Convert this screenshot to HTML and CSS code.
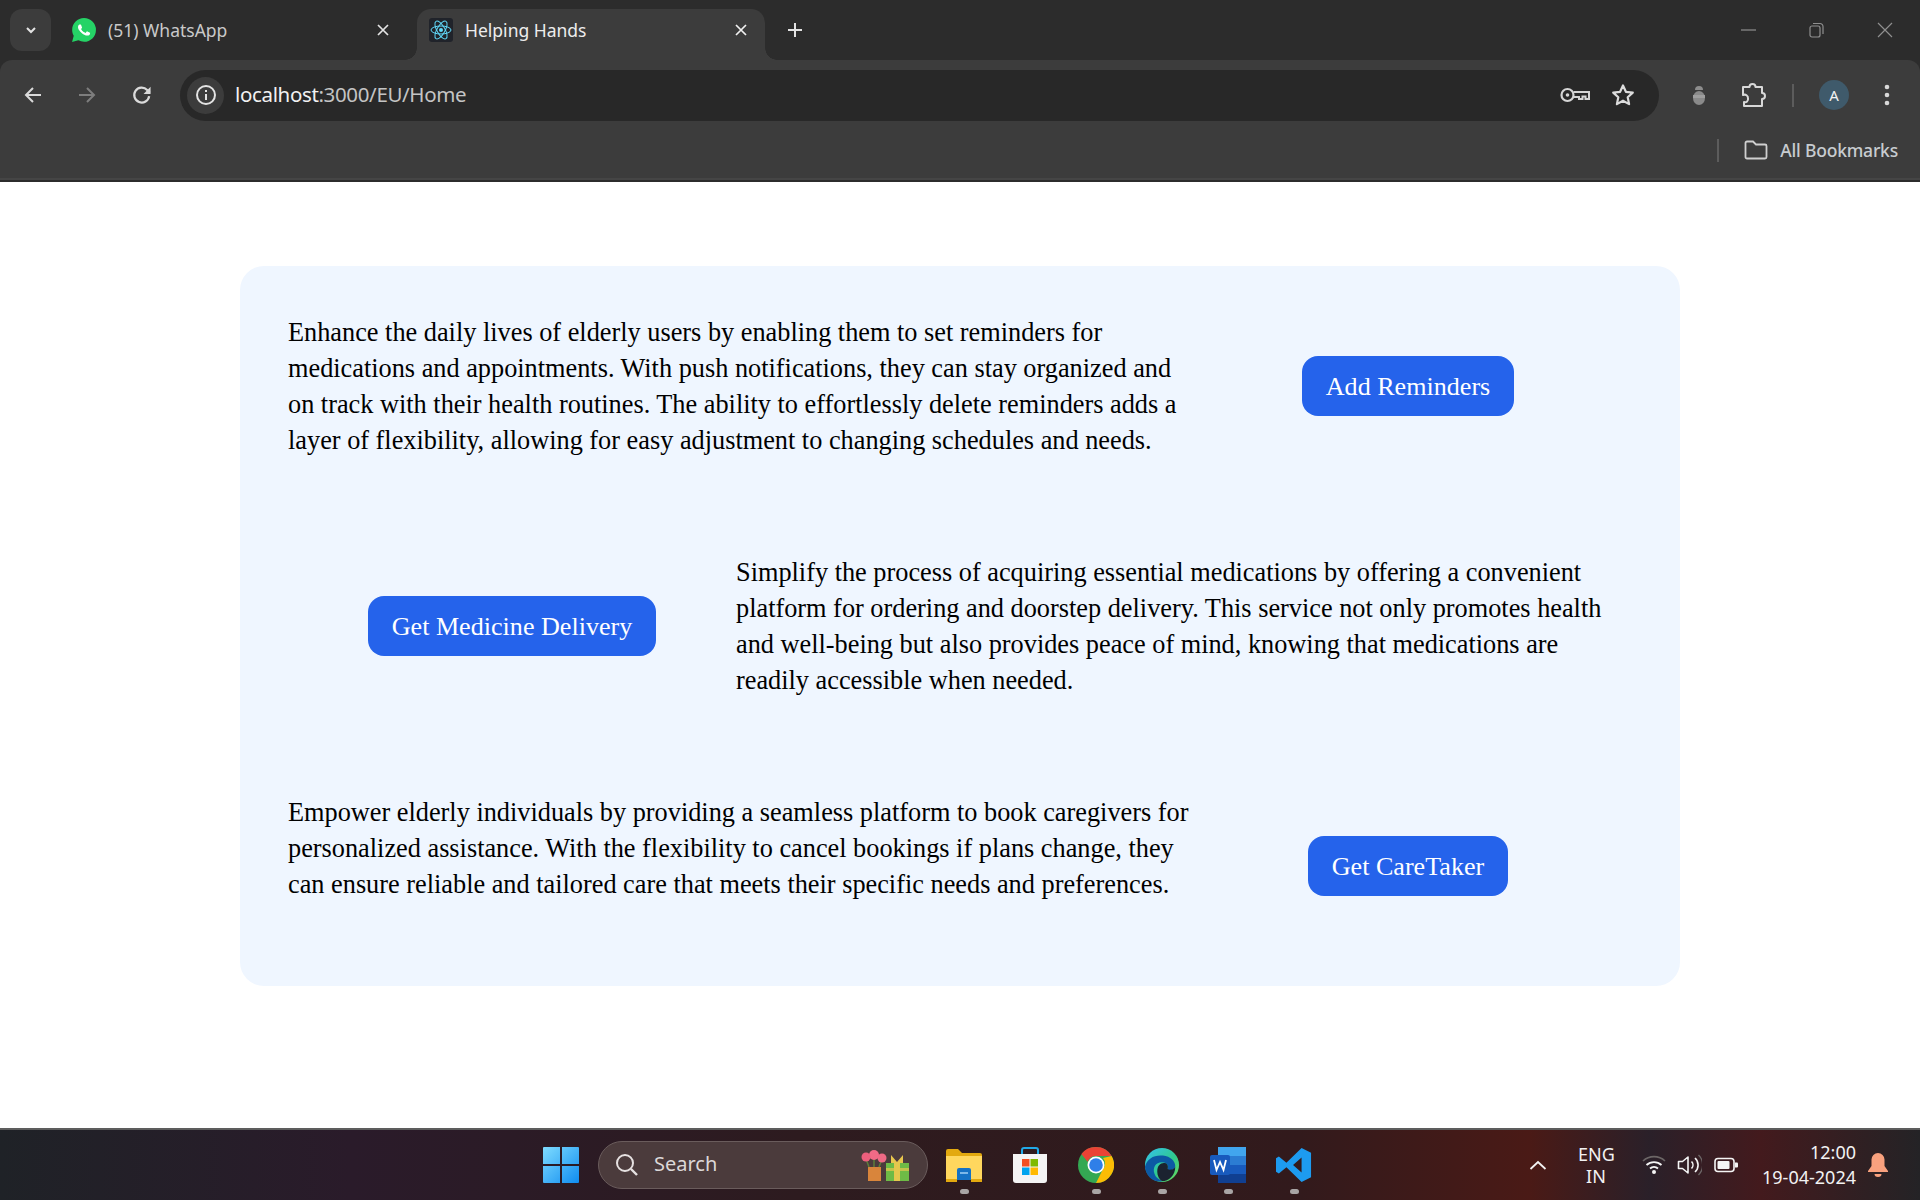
FILE: index.html
```html
<!DOCTYPE html>
<html lang="en">
<head>
    <meta charset="UTF-8">
    <meta name="viewport" content="width=device-width, initial-scale=1.0">
    <title>Helping Hands</title>
    <link rel="stylesheet" href="styles.css">
</head>
<body>
    <div class="chrome">
        <div class="tabstrip">
            <button class="tab-search"><svg width="14" height="14" viewBox="0 0 14 14"><path d="M3 5l4 4 4-4" fill="none" stroke="#e3e3e3" stroke-width="2"/></svg></button>
            <div class="tab">
                <svg class="favicon" viewBox="0 0 24 24"><path fill="#25d366" d="M20.464 3.488A11.815 11.815 0 0012.05 0C5.495 0 .16 5.335.157 11.892c0 2.096.547 4.142 1.588 5.945L.057 24l6.305-1.654a11.882 11.882 0 005.683 1.448h.005c6.554 0 11.89-5.335 11.893-11.893a11.821 11.821 0 00-3.48-8.413z"/><path fill="#fff" d="M17.472 14.382c-.297-.149-1.758-.867-2.03-.967-.273-.099-.471-.148-.67.15-.197.297-.767.966-.94 1.164-.173.199-.347.223-.644.075-.297-.15-1.255-.463-2.39-1.475-.883-.788-1.48-1.761-1.653-2.059-.173-.297-.018-.458.13-.606.134-.133.298-.347.446-.52.149-.174.198-.298.298-.497.099-.198.05-.371-.025-.52-.075-.149-.669-1.612-.916-2.207-.242-.579-.487-.5-.669-.51-.173-.008-.371-.01-.57-.01-.198 0-.52.074-.792.372-.272.297-1.04 1.016-1.04 2.479 0 1.462 1.065 2.875 1.213 3.074.149.198 2.096 3.2 5.077 4.487.709.306 1.262.489 1.694.625.712.227 1.36.195 1.871.118.571-.085 1.758-.719 2.006-1.413.248-.694.248-1.289.173-1.413-.074-.124-.272-.198-.57-.347"/></svg>
                <span class="tab-title">(51) WhatsApp</span>
                <svg class="tab-close" viewBox="0 0 14 14"><path d="M2 2l10 10M12 2L2 12" stroke="#e3e3e3" stroke-width="1.7"/></svg>
            </div>
            <div class="tab active">
                <svg class="favicon react" viewBox="0 0 24 24"><rect width="24" height="24" rx="3" fill="#20232a"/><g fill="none" stroke="#61dafb" stroke-width="1"><ellipse cx="12" cy="12" rx="10" ry="4"/><ellipse cx="12" cy="12" rx="10" ry="4" transform="rotate(60 12 12)"/><ellipse cx="12" cy="12" rx="10" ry="4" transform="rotate(120 12 12)"/></g><circle cx="12" cy="12" r="2" fill="#61dafb"/></svg>
                <span class="tab-title">Helping Hands</span>
                <svg class="tab-close" viewBox="0 0 14 14"><path d="M2 2l10 10M12 2L2 12" stroke="#f0f0f0" stroke-width="1.7"/></svg>
            </div>
            <svg class="new-tab" viewBox="0 0 16 16"><path d="M8 1v14M1 8h14" stroke="#e3e3e3" stroke-width="2"/></svg>
            <div class="window-btns">
                <svg width="16" height="16" viewBox="0 0 16 16"><path d="M0 8h15" stroke="#8f8f8f" stroke-width="1.2"/></svg>
                <svg width="16" height="16" viewBox="0 0 16 16"><rect x="1" y="4" width="10" height="11" rx="2" fill="none" stroke="#8f8f8f" stroke-width="1.2"/><path d="M4 1.5h7a3 3 0 013 3V12" fill="none" stroke="#8f8f8f" stroke-width="1.2"/></svg>
                <svg width="16" height="16" viewBox="0 0 16 16"><path d="M1 1l14 14M15 1L1 15" stroke="#8f8f8f" stroke-width="1.2"/></svg>
            </div>
        </div>
        <div class="toolbar">
            <svg class="nav-icon" viewBox="0 0 20 20"><path d="M18 10H3M10 3l-7 7 7 7" fill="none" stroke="#dadada" stroke-width="2"/></svg>
            <svg class="nav-icon" viewBox="0 0 20 20"><path d="M2 10h15M10 3l7 7-7 7" fill="none" stroke="#7d7d7d" stroke-width="2"/></svg>
            <svg class="nav-icon" viewBox="0 0 20 20"><path d="M16.5 11a6.8 6.8 0 11-1.8-5.6L17 8" fill="none" stroke="#dadada" stroke-width="2"/><path d="M17.8 2.5V9h-6.4z" fill="#dadada"/></svg>
            <div class="omnibox">
                <span class="site-info"><svg width="22" height="22" viewBox="0 0 22 22"><circle cx="11" cy="11" r="9" fill="none" stroke="#e3e3e3" stroke-width="2"/><path d="M11 10v6M11 6v2" stroke="#e3e3e3" stroke-width="2"/></svg></span>
                <span class="url">localhost<span class="url-dim">:3000/EU/Home</span></span>
                <svg class="omni-key" width="30" height="16" viewBox="0 0 30 16"><circle cx="7.500" cy="8" r="6" fill="none" stroke="#d5d5d5" stroke-width="2.200"/><circle cx="7.500" cy="8" r="1.800" fill="#d5d5d5"/><path d="M13.500 5h15.500v7h-3.500v-2.500h-3V12h-3.500V10h-5.500" fill="none" stroke="#d5d5d5" stroke-width="2"/></svg>
                <svg class="omni-star" width="24" height="24" viewBox="0 0 24 24"><path d="M12 2.500l2.900 6.300 6.900.8-5.100 4.700 1.400 6.800-6.100-3.400-6.100 3.400 1.400-6.800-5.100-4.700 6.900-.8z" fill="none" stroke="#dcdcdc" stroke-width="2.200" stroke-linejoin="round"/></svg>
            </div>
            <svg class="ext-bug" width="18" height="20" viewBox="0 0 18 20"><path d="M5 5a4 4 0 018 0z" fill="#8d8d8d"/><ellipse cx="9" cy="13" rx="6" ry="7" fill="#8a8a8a"/><path d="M3 10h12v3H3z" fill="#9e9e9e"/></svg>
            <svg class="ext-puzzle" width="26" height="26" viewBox="0 0 26 26"><path d="M2 5h6.500a3 3 0 016 0H21v6a2.800 2.800 0 010 6v7H3v-4a3 3 0 004-3.500A3.500 3.500 0 002 13z" fill="none" stroke="#d8d8d8" stroke-width="2" stroke-linejoin="round"/></svg>
            <span class="tool-sep"></span>
            <span class="avatar">A</span>
            <svg class="kebab" width="6" height="22" viewBox="0 0 6 22"><circle cx="3" cy="3" r="2.300" fill="#d8d8d8"/><circle cx="3" cy="11" r="2.300" fill="#d8d8d8"/><circle cx="3" cy="19" r="2.300" fill="#d8d8d8"/></svg>
        </div>
        <div class="bookmarks">
            <span class="bm-sep"></span>
            <svg width="24" height="20" viewBox="0 0 24 20"><path d="M1.500 3a1.500 1.500 0 011.500-1.500h6l3 3h9A1.500 1.500 0 0122.500 6v11a1.500 1.500 0 01-1.500 1.500H3A1.500 1.500 0 011.500 17z" fill="none" stroke="#cfcfcf" stroke-width="1.800"/></svg>
            <span class="bm-label">All Bookmarks</span>
        </div>
    </div>

    <main class="page">
        <section class="card">
            <div class="feature">
                <p>Enhance the daily lives of elderly users by enabling them to set reminders for<br>medications and appointments. With push notifications, they can stay organized and<br>on track with their health routines. The ability to effortlessly delete reminders adds a<br>layer of flexibility, allowing for easy adjustment to changing schedules and needs.</p>
                <div class="action"><a class="btn">Add Reminders</a></div>
            </div>
            <div class="feature flip">
                <div class="action"><a class="btn">Get Medicine Delivery</a></div>
                <p>Simplify the process of acquiring essential medications by offering a convenient<br>platform for ordering and doorstep delivery. This service not only promotes health<br>and well-being but also provides peace of mind, knowing that medications are<br>readily accessible when needed.</p>
            </div>
            <div class="feature">
                <p>Empower elderly individuals by providing a seamless platform to book caregivers for<br>personalized assistance. With the flexibility to cancel bookings if plans change, they<br>can ensure reliable and tailored care that meets their specific needs and preferences.</p>
                <div class="action"><a class="btn">Get CareTaker</a></div>
            </div>
        </section>
    </main>

    <footer class="taskbar">
        <div class="task-apps">
            <svg class="start" width="36" height="36" viewBox="0 0 36 36"><defs><linearGradient id="win" x1="0" y1="0" x2="1" y2="1"><stop offset="0" stop-color="#7fdcff"/><stop offset="1" stop-color="#0f8cf0"/></linearGradient></defs><path fill="url(#win)" d="M0 1a1 1 0 011-1h16v17H0zM19 0h16a1 1 0 011 1v16H19zM0 19h17v17H1a1 1 0 01-1-1zM19 19h17v16a1 1 0 01-1 1H19z"/></svg>
            <div class="search">
                <svg width="24" height="24" viewBox="0 0 24 24"><circle cx="10" cy="10" r="8" fill="none" stroke="#e6e1e1" stroke-width="2"/><path d="M16 16l6 6" stroke="#e6e1e1" stroke-width="2.400"/></svg>
                <span class="search-label">Search</span>
                <svg class="search-art" width="50" height="32" viewBox="0 0 50 32"><rect x="8" y="18" width="13" height="14" fill="#d9853b"/><path d="M14 18V8M9 18L6 10M19 18l3-8" stroke="#5d7d3a" stroke-width="1.500"/><circle cx="14" cy="6" r="5" fill="#f06a86"/><circle cx="6" cy="8" r="4.500" fill="#ec5f7d"/><circle cx="22" cy="9" r="4.500" fill="#ee6a85"/><rect x="26" y="14" width="23" height="18" fill="#6ebb46"/><rect x="34" y="14" width="6" height="18" fill="#e5c84d"/><rect x="26" y="19" width="23" height="3" fill="#e5c84d" opacity=".7"/><path d="M31 6l6 7 6-7v8H31z" fill="#e8c64e"/></svg>
            </div>
            <div class="app running">
                <svg width="36" height="36" viewBox="0 0 36 36"><path d="M0 4a2 2 0 012-2h10l4 4h18a2 2 0 012 2v25H0z" fill="#e3a90f"/><path d="M0 9h36v23H0z" fill="#ffd75e"/><path d="M11 23a2 2 0 012-2h10a2 2 0 012 2v10H11z" fill="#1572c4"/><path d="M14 26h8" stroke="#9fd0f5" stroke-width="1.500"/><path d="M0 32h11v3H0zM25 32h11v3H25z" fill="#e3a90f"/></svg>
            </div>
            <div class="app">
                <svg width="36" height="36" viewBox="0 0 36 36"><path d="M10 8V3a2 2 0 012-2h12a2 2 0 012 2v5" fill="none" stroke="#21a9e8" stroke-width="2"/><path d="M1 7h34v26a3 3 0 01-3 3H4a3 3 0 01-3-3z" fill="#f4f4f4"/><rect x="10" y="12" width="7.500" height="7.500" fill="#f25022"/><rect x="18.500" y="12" width="7.500" height="7.500" fill="#7fba00"/><rect x="10" y="20.500" width="7.500" height="7.500" fill="#00a4ef"/><rect x="18.500" y="20.500" width="7.500" height="7.500" fill="#ffb900"/></svg>
            </div>
            <div class="app running">
                <svg width="36" height="36" viewBox="0 0 36 36"><circle cx="18" cy="18" r="18" fill="#34a853"/><path d="M18 0a18 18 0 0115.600 9H18a9 9 0 00-8.400 5.800L3.400 7A18 18 0 0118 0z" fill="#ea4335"/><path d="M33.600 9A18 18 0 0118 36l6.500-13A9 9 0 0025 11z" fill="#fbbc05"/><circle cx="18" cy="18" r="8.500" fill="#fff"/><circle cx="18" cy="18" r="6.800" fill="#2f7fe8"/></svg>
            </div>
            <div class="app running">
                <svg width="38" height="36" viewBox="0 0 38 36"><defs><linearGradient id="edge" x1="0" y1="0" x2="1" y2="1"><stop offset="0" stop-color="#35c1f1"/><stop offset=".55" stop-color="#2fc98f"/><stop offset="1" stop-color="#6fdc55"/></linearGradient></defs><circle cx="19" cy="18" r="18" fill="url(#edge)"/><path d="M1 20C3 11 11 7 20 8c8 1 13 6 13 11 0 4-5 5-9 4 3-3 1-8-5-8-7 0-10 6-8 12 1 4 5 7 10 8C10 37 2 30 1 20z" fill="#0c59a4"/><path d="M14 25c0-6 3-9 7-9 3 0 5 2 4 6-1 1 6 2 8-2 0 9-7 15-14 15-3-2-5-6-5-10z" fill="#1b2330"/></svg>
            </div>
            <div class="app running">
                <svg width="36" height="36" viewBox="0 0 36 36"><rect x="8" y="0" width="28" height="36" rx="2" fill="#2b7cd3"/><rect x="8" y="0" width="28" height="9" fill="#41a5ee"/><rect x="8" y="18" width="28" height="9" fill="#185abd"/><rect x="8" y="27" width="28" height="9" fill="#103f91"/><rect x="0" y="8" width="20" height="20" rx="2" fill="#185abd"/><path d="M4 13l2.500 10 3.500-8 3.500 8L16 13" fill="none" stroke="#fff" stroke-width="1.800"/></svg>
            </div>
            <div class="app running">
                <svg width="38" height="36" viewBox="0 0 38 36"><path d="M27 0l10 5v26l-10 5-16-15.500L3 27l-3-2v-14l3-2 8 6.500zM27 10l-9 8 9 8z" fill="#1d9bf0" fill-rule="evenodd"/></svg>
            </div>
        </div>
        <div class="tray">
            <svg class="tray-chevron" width="18" height="10" viewBox="0 0 18 10"><path d="M1.500 9L9 2l7.500 7" fill="none" stroke="#f2f2f2" stroke-width="1.800"/></svg>
            <div class="lang">ENG<br>IN</div>
            <svg width="24" height="20" viewBox="0 0 24 20"><path d="M1 6a16 16 0 0122 0" fill="none" stroke="#6c6666" stroke-width="1.600"/><path d="M4.500 10a11 11 0 0115 0M8 13.500a6 6 0 018 0" fill="none" stroke="#f5f5f5" stroke-width="1.800"/><circle cx="12" cy="17" r="2" fill="#f5f5f5"/></svg>
            <svg class="tray-sound" width="25" height="22" viewBox="0 0 25 22"><path d="M1.500 7.500h4L11 3v16l-5.500-4.500h-4z" fill="none" stroke="#f5f5f5" stroke-width="1.600" stroke-linejoin="round"/><path d="M14.500 7.500a5 5 0 010 7" fill="none" stroke="#f5f5f5" stroke-width="1.600"/><path d="M18 4a9.500 9.500 0 010 14" fill="none" stroke="#f5f5f5" stroke-width="1.600"/><path d="M21.500 1a14 14 0 010 20" fill="none" stroke="#6c6666" stroke-width="1.400"/></svg>
            <svg class="tray-battery" width="24" height="16" viewBox="0 0 24 16"><rect x="1" y="1.500" width="19" height="13" rx="3" fill="none" stroke="#f5f5f5" stroke-width="1.600"/><rect x="3.500" y="4" width="12" height="8" rx="1" fill="#f5f5f5"/><path d="M21 5.500h2a1 1 0 011 1v3a1 1 0 01-1 1h-2z" fill="#f5f5f5"/></svg>
            <div class="clock">12:00<br>19-04-2024</div>
            <svg class="bell" width="20" height="24" viewBox="0 0 20 24"><path d="M10 0a6.500 6.500 0 016.500 6.500V13l3.500 5v1H0v-1l3.500-5V6.500A6.500 6.500 0 0110 0z" fill="#f8a17e"/><path d="M6.500 21h7a3.500 3 0 01-7 0z" fill="#f8a17e"/></svg>
        </div>
    </footer>
</body>
</html>
```

FILE: styles.css
```css
*{margin:0; padding:0; box-sizing:border-box}
html,body{height:100%}
body{display:flex; flex-direction:column; height:1200px; background:#fff; font-family:"Liberation Serif", serif; overflow:hidden}

/* browser chrome */
.chrome{background:#2c2c2c; height:182px; flex-shrink:0; font-family:"Noto Sans", sans-serif; color:#e3e3e3}
.tabstrip{display:flex; align-items:flex-end; height:60px; padding-left:10px}
.tab-search{width:41px; height:42px; margin-bottom:9px; background:#3c3c3c; border:0; border-radius:12px; display:flex; align-items:center; justify-content:center}
.tab{display:flex; align-items:center; width:348px; height:51px; padding:0 12px 9px 12px; position:relative}
.tab:nth-child(2){width:366px; padding-left:21px}
.tab.active{background:#3c3c3c; border-radius:14px 14px 0 0}
.tab.active::before,.tab.active::after{content:''; position:absolute; bottom:0; width:12px; height:12px; background:radial-gradient(circle at 0 0, #2c2c2c 11.500px, #3c3c3c 12px)}
.tab.active::before{left:-12px}
.tab.active::after{right:-12px; background:radial-gradient(circle at 100% 0, #2c2c2c 11.500px, #3c3c3c 12px)}
.favicon{width:24px; height:24px; flex-shrink:0}
.tab-title{font-size:17.500px; margin-left:12px; flex:1; color:#c9c9c9; white-space:nowrap}
.tab.active .tab-title{color:#ececec}
.tab-close{width:14px; height:14px; flex-shrink:0; margin-right:15px}
.tab.active .tab-close{margin-right:5px}
.new-tab{width:16px; height:16px; margin:0 0 22px 22px}
.window-btns{margin-left:auto; display:flex; gap:52px; padding:0 27px 22px 0}
.toolbar{display:flex; align-items:center; height:70px; background:#3c3c3c; border-radius:12px 12px 0 0; padding:0 0 0 23px}
.nav-icon{width:20px; height:20px; margin-right:34px; flex-shrink:0}
.nav-icon:nth-child(3){margin-right:27px; width:22px; height:22px}
.omnibox{display:flex; align-items:center; width:1479px; height:51px; background:#282828; border-radius:26px; padding-left:7px}
.site-info{width:37px; height:37px; border-radius:50%; background:#3c3c3c; display:flex; align-items:center; justify-content:center}
.url{font-size:20.500px; line-height:24px; letter-spacing:-.35px; margin:0 0 2px 11px; color:#f1f1f1; flex:1}
.url-dim{color:#c4c4c4}
.omni-star{margin:0 24px 0 21px}
.ext-bug{margin-left:31px}
.ext-puzzle{margin-left:33px}
.tool-sep{width:2px; height:23px; background:#5c5c5c; margin-left:25px}
.avatar{width:30px; height:30px; border-radius:50%; background:#3f5a6b; margin-left:25px; font-size:15px; display:flex; align-items:center; justify-content:center; color:#f2f2f2}
.kebab{margin-left:35px}
.bookmarks{display:flex; align-items:center; justify-content:flex-end; height:50px; background:#3c3c3c; border-bottom:2px solid #454545; padding:0 22px 8px 0}
.bm-sep{width:2px; height:23px; background:#5c5c5c; margin-right:25px}
.bm-label{font-size:17.500px; font-weight:500; letter-spacing:-.2px; margin-left:12px; color:#c8ccd0}

/* page content */
.page{flex:1; padding:84px 240px 0}
.card{background:#eff6ff; border-radius:24px; padding:48px}
.feature{display:grid; grid-template-columns:2fr 1fr; min-height:144px; margin-bottom:96px}
.feature:last-child{margin-bottom:0}
.feature.flip{grid-template-columns:1fr 2fr}
.feature p{font-size:26.300px; line-height:36px; color:#000; white-space:nowrap; min-width:0; padding-top:1px; margin-bottom:-1px}
.action{display:flex; justify-content:center; align-items:center; min-width:0}
.btn{background:#2563eb; color:#fff; font-size:26.100px; line-height:36px; padding:13px 24px 11px; border-radius:16px}

/* windows taskbar */
.taskbar{display:flex; align-items:center; height:72px; flex-shrink:0; position:relative; border-top:2px solid #5d5d5d; font-family:"Noto Sans", sans-serif; color:#f2f2f2;
    background:linear-gradient(90deg, #1f2227 0, #2a1b2a 350px, #2d1b1f 800px, #321a1c 1300px, #4a1a16 1530px, #2a2029 1650px, #431a1d 1760px, #242326 1920px)}
.task-apps{display:flex; align-items:center; padding-left:543px}
.start{margin-right:19px}
.search{display:flex; align-items:center; width:330px; height:48px; margin-right:18px; border-radius:24px; background:#4b3b3c; border:1px solid #6a5c5c; padding-left:16px}
.search-label{font-size:20px; line-height:24px; margin:0 0 2px 15px; flex:1; color:#dcd8d8}
.search-art{margin-right:17px}
.app{display:flex; width:36px; height:36px; margin-right:30px; position:relative; justify-content:center}
.app.running::after{content:''; position:absolute; left:14px; bottom:-11px; width:9px; height:5px; border-radius:3px; background:#a9a5a5}
.tray{margin-left:auto; display:flex; align-items:center; padding-right:32px}
.tray-chevron{margin-right:31px}
.lang{font-size:18px; line-height:22px; text-align:center; margin-right:28px; width:36px}
.tray-sound{margin-left:11px}
.tray-battery{margin-left:12px}
.clock{font-size:18px; line-height:25px; text-align:right; width:118px; margin-right:12px}
```
